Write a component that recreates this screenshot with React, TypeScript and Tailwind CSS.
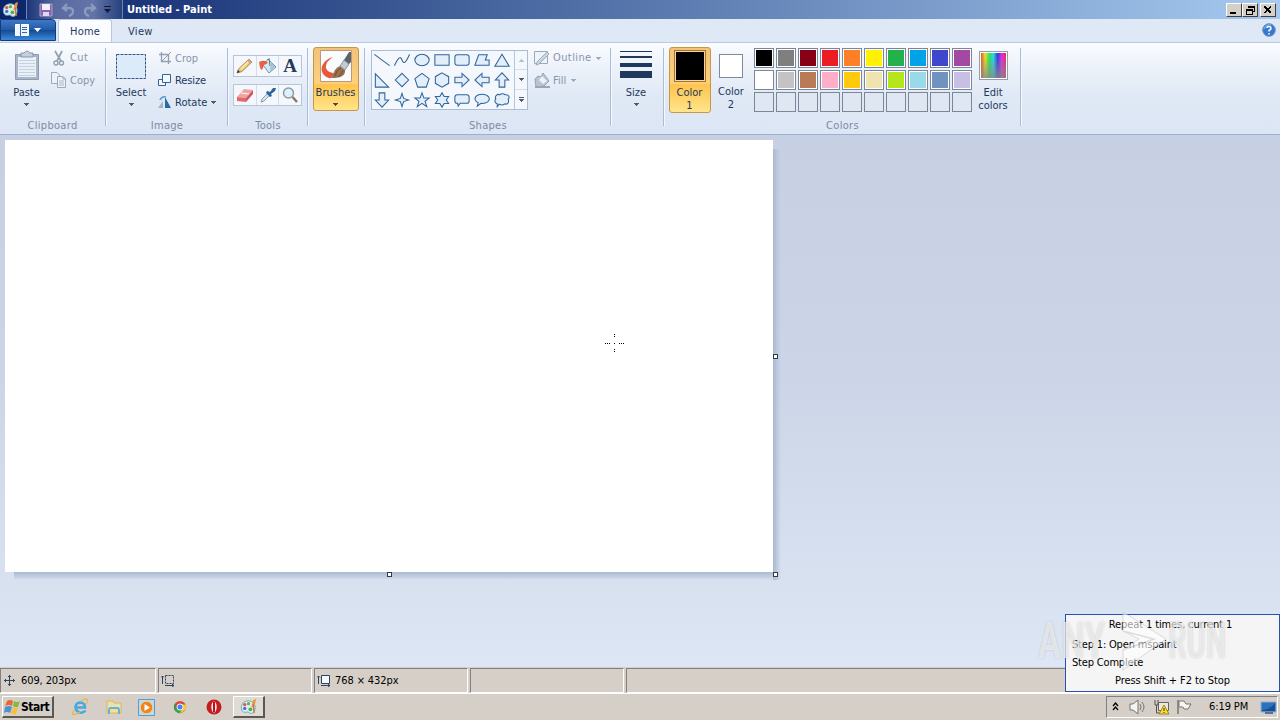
import React from 'react';

const SHAPES = [
    'M2 4L18 16', 'M2 16C6 8 8 5 10 10S14 13 18 4', 'M2.5 10a7.5 6 0 1 0 15 0a7.5 6 0 1 0 -15 0',
    'M2.5 4.5H17.5V15.5H2.5Z', 'M5 4.5H15Q17.5 4.5 17.5 7V13Q17.5 15.5 15 15.5H5Q2.5 15.5 2.5 13V7Q2.5 4.5 5 4.5Z',
    'M6.5 4.5H15.5L13.5 10H17.5V15.5H2.5Z', 'M10 4L17.5 16.5H2.5Z',
    'M3 3.5V17.5H17Z', 'M10 3L17 10L10 17L3 10Z', 'M10 3L17.5 8.5L14.5 17.5H5.5L2.5 8.5Z',
    'M10 2.5L17 6.5V13.5L10 17.5L3 13.5V6.5Z', 'M2.5 7H10V3L17.5 10L10 17V13H2.5Z',
    'M17.5 7H10V3L2.5 10L10 17V13H17.5Z', 'M7 17.5V10H3L10 2.5L17 10H13V17.5Z',
    'M7 2.5V10H3L10 17.5L17 10H13V2.5Z', 'M10 3L11.7 8.3L17 10L11.7 11.7L10 17L8.3 11.7L3 10L8.3 8.3Z',
    'M10 2.5L12 8H17.5L13.2 11.3L15 17L10 13.5L5 17L6.8 11.3L2.5 8H8Z',
    'M10 2.5L12.3 6.3H17L14.5 10L17 13.7H12.3L10 17.5L7.7 13.7H3L5.5 10L3 6.3H7.7Z',
    'M5 4.5H15Q17.5 4.5 17.5 7V11Q17.5 13.5 15 13.5H8L6 16.5L5.5 13.5H5Q2.5 13.5 2.5 11V7Q2.5 4.5 5 4.5Z',
    'M6 13C-1 9 4 4 10 4S20 8 16 12Q13 14 9 13.5L5 16.5Z',
    'M5 14C2 13 2 10 3.5 9C2 6 5 3 7.5 4.5C9 3 12 3 13.5 4.5C17 4 18.5 7 16.5 9.5C18 13 15 15 13 14C11 16 8 15 7 14.5L5 17Z',
];

const PALETTE = [
    '#000000', '#7f7f7f', '#880015', '#ed1c24', '#ff7f27', '#fff200', '#22b14c', '#00a2e8', '#3f48cc', '#a349a4',
    '#ffffff', '#c3c3c3', '#b97a57', '#ffaec9', '#ffc90e', '#efe4b0', '#b5e61d', '#99d9ea', '#7092be', '#c8bfe7',
];

const Arrow: React.FC<{ className?: string }> = ({ className = 'text-[#4d5b70]' }) => (
    <svg width="5" height="3" className={`shrink-0 ${className}`} shapeRendering="crispEdges"><path d="M0 0H5L2.5 3Z" fill="currentColor" /></svg>
);

const Group: React.FC<{ label?: string; className: string; children: React.ReactNode }> = ({ label, className, children }) => (
    <div className={`flex h-full shrink-0 ${className}`}>
        <div className="flex min-w-0 flex-1 flex-col">
            <div className="flex h-[76px] pt-1">{children}</div>
            <div className="text-center leading-[13px] tracking-[0.3px] text-[#7c8ba3]">{label}</div>
        </div>
        <div className="mt-[5px] h-[78px] w-0.5 border-l border-[#a9bcd8] bg-[#f5f9fe]" />
    </div>
);

const PaletteIcon: React.FC<{ size: number }> = ({ size }) => (
    <svg width={size} height={size} viewBox="0 0 18 18">
        <path d="M9 3C3 3 0 8 2 13C4 17 8 14 9 15C11 18 16 16 16 10C16 6 13 3 9 3Z" fill="#d9edf8" stroke="#719eb7" />
        <circle cx="5" cy="7" r="1.8" fill="#dd593f" /><circle cx="9" cy="6" r="1.7" fill="#6bac3b" />
        <circle cx="5" cy="11" r="1.8" fill="#4275ce" /><circle cx="11" cy="12" r="2" fill="#55ad3b" />
        <path d="M12 9L14 2L17 1L16 6L14 10Z" fill="#ed9332" /><path d="M14 7L15 16" stroke="#c27b3d" strokeWidth="1.5" />
    </svg>
);

const CutIcon = () => (
    <svg width="12" height="16" viewBox="0 0 12 16" fill="none" stroke="#929fae">
        <path d="M2 1L8 11M9 1L4 11" strokeWidth="1.7" /><circle cx="3" cy="13" r="2" strokeWidth="1.4" /><circle cx="8.5" cy="13" r="2" strokeWidth="1.4" />
    </svg>
);

const CopyIcon = () => (
    <svg width="16" height="16" viewBox="0 0 16 16" fill="#edf2f8" stroke="#9caabc">
        <path d="M.5 .5H6L8.5 3V11.5H.5Z" /><path d="M6.5 4.5H12L14.5 7V15.5H6.5ZM12 4.5V7H14.5" /><path d="M8 9H13M8 11H13M8 13H13" stroke="#aebac8" />
    </svg>
);

const CropIcon = () => (
    <svg width="14" height="14" viewBox="0 0 14 14" fill="none" stroke="#929fae">
        <path d="M3.5 1V10.5H13M1 3.5H10.5V13" strokeWidth="1.3" /><path d="M4 10L13 1" />
    </svg>
);

const ResizeIcon = () => (
    <svg width="14" height="14" viewBox="0 0 14 14" fill="#f3f8fd" stroke="#2f659b">
        <path d="M.5 6.5H7.5V12.5H.5Z" /><path d="M4.5 1.5H12.5V9.5H4.5Z" />
    </svg>
);

const RotateIcon = () => (
    <svg width="14" height="14" viewBox="0 0 14 14">
        <path d="M0 13L5 6V13Z" fill="#a2b4c4" /><path d="M7 2L13 13H7Z" fill="#286b9f" /><path d="M2 5Q4 1 8 2" fill="none" stroke="#54a0d1" strokeWidth="1.6" />
    </svg>
);

const tools = [
    <svg width="20" height="20" viewBox="0 0 20 20"><path d="M2 17L3.5 13L14 3L17 6L7 15.5Z" fill="#f4c96b" stroke="#8a7a5c" strokeWidth=".8" /><path d="M14 3L17 6L15 8L12 5Z" fill="#d9a08e" /><path d="M2 17L3 14L5 16Z" fill="#333" /><path d="M6 13L13 6" stroke="#fff1b3" strokeWidth="1.5" /></svg>,
    <svg width="20" height="20" viewBox="0 0 20 20"><path d="M10 3L18 11L11 17L5 9Z" fill="#d7e7f3" stroke="#527b9b" strokeWidth=".8" /><path d="M12 10L11 2" stroke="#577" /><path d="M1 6Q7 3 10 7L6 9L4 14Q2 14 1 6Z" fill="#e76244" /><path d="M13 6L17 11L12 15Z" fill="#9fc4dc" /></svg>,
    <span className="font-['Liberation_Serif',serif] text-[19px] leading-5 font-bold text-[#263a58]">A</span>,
    <svg width="20" height="20" viewBox="0 0 20 20"><path d="M2 12L9 4L18 5L11 13Z" fill="#f0a3a3" /><path d="M2 12L11 13L11 17L2 16Z" fill="#e2686c" /><path d="M11 13L18 5V9L11 17Z" fill="#cb585d" /><path d="M6 8L14 9" stroke="#fff" /></svg>,
    <svg width="20" height="20" viewBox="0 0 20 20"><path d="M3 17L4 14L11 7L13 9L6 16Z" fill="#d3e5f4" stroke="#718ca6" strokeWidth=".8" /><path d="M9 6L12 7L15 3L18 3L17 6L13 9L14 11L12 12L8 8Z" fill="#27659e" /></svg>,
    <svg width="20" height="20" viewBox="0 0 20 20"><circle cx="8.5" cy="8" r="5" fill="#e1effa" stroke="#8c9aab" strokeWidth="1.5" /><path d="M12.5 12L17 17" stroke="#8c765f" strokeWidth="2.5" /></svg>,
];

const Ribbon = () => (
    <div className="flex h-[93px] shrink-0 border-t border-b border-t-[#bac9df] border-b-[#9ab0d0] bg-[linear-gradient(#fafcff_0,#eff4fb_20px,#dfe8f5_55px,#dde6f4_100%)] text-[11px] text-[#1e395b]">
        <Group label="Clipboard" className="w-[107px]">
            <div className="ml-[9px] flex w-[35px] flex-col items-center pt-[3px]">
                <svg width="26" height="31" viewBox="0 0 26 31">
                    <path d="M1.5 4.5H24.5V29.5H1.5Z" fill="#a9b6ca" stroke="#8b9bb3" /><path d="M4 7H22V27H4Z" fill="#eaf0f8" />
                    <path d="M5 10.5H21M5 13.5H21M5 16.5H21M5 19.5H21M5 22.5H21M5 25.5H21" stroke="#c5d0e0" />
                    <path d="M7 7V3H10Q13 -1 16 3H19V7Z" fill="#c4cedd" stroke="#8797ad" />
                </svg>
                <span className="mt-[5px] leading-[13px]">Paste</span>
                <Arrow className="mt-[4px] text-[#4d5b70]" />
            </div>
            <div className="ml-[7px] flex flex-col text-[#8795aa]">
                <div className="flex h-[22px] items-center"><span className="flex w-[19px] pl-[2px]"><CutIcon /></span><span className="pt-px tracking-[0.4px]">Cut</span></div>
                <div className="flex h-[22px] items-center"><span className="w-[19px]"><CopyIcon /></span><span className="pt-0.5">Copy</span></div>
            </div>
        </Group>
        <Group label="Image" className="w-[122px]">
            <div className="ml-[6px] flex w-9 flex-col items-center pt-[7px]">
                <svg width="30" height="25"><rect x=".5" y=".5" width="29" height="24" fill="#dcebfa" stroke="#2e5684" strokeDasharray="3 1" /></svg>
                <span className="mt-[7px] leading-[13px]">Select</span>
                <Arrow className="mt-[4px] text-[#4d5b70]" />
            </div>
            <div className="ml-[9px]">
                <div className="flex h-[22px] items-center text-[#8795aa]"><span className="w-[17px]"><CropIcon /></span><span className="pt-0.5">Crop</span></div>
                <div className="flex h-[22px] items-center"><span className="w-[17px]"><ResizeIcon /></span><span className="pt-0.5 tracking-[-0.1px]">Resize</span></div>
                <div className="flex h-[22px] items-center"><span className="w-[17px]"><RotateIcon /></span><span className="pt-0.5">Rotate</span><Arrow className="ml-1 text-[#4d5b70]" /></div>
            </div>
        </Group>
        <Group label="Tools" className="w-20">
            <div className="mt-2 ml-[4px] flex flex-col gap-[7px]">
                {[0, 3].map(row => (
                    <div key={row} className="flex h-[22px] w-[69px] divide-x divide-[#d3dde9] border border-[#b6c5da] bg-[#f4f8fd]">
                        {tools.slice(row, row + 3).map((icon, i) => <span key={i} className="flex flex-1 items-center justify-center">{icon}</span>)}
                    </div>
                ))}
            </div>
        </Group>
        <Group className="w-[57px]">
            <button className="ml-1 flex h-16 w-[46px] flex-col items-center rounded-[3px] border border-[#c79746] bg-[linear-gradient(#f4c178,#fbd17d_35px,#ffc34e_37px,#ffe58b)] pt-[2px] pr-px">
                <svg width="32" height="32" viewBox="0 0 32 32">
                    <path d="M.5 .5H31.5V31.5H.5Z" fill="#f9fbfd" stroke="#ba9a74" />
                    <path d="M13 7C4 9 -2 19 4 25Q8 30 14 27L13 23Q7 22 6 18Q5 12 13 7Z" fill="#e8583a" />
                    <path d="M12 28Q14 18 20 16L25 20Q26 28 12 28Z" fill="#9b7250" /><path d="M15 26Q16 20 21 18M18 27Q22 25 23 20" stroke="#6e4c34" fill="none" />
                    <path d="M20 16L24 10L29 14L25 20Z" fill="#c1cbd0" stroke="#8b979f" /><path d="M24 10L29 2H31V12L29 14Z" fill="#5c636d" />
                </svg>
                <span className="mt-[4px] leading-[13px]">Brushes</span>
                <Arrow className="mt-[4px] text-[#6b3f2c]" />
            </button>
        </Group>
        <Group label="Shapes" className="w-[246px]">
            <div className="mt-[3px] ml-[5px] flex h-[60px] w-[157px] border border-[#a9bdd8] bg-[#f4f8fd]">
                <div className="grid h-[58px] w-[142px] shrink-0 auto-rows-[20px] grid-cols-[repeat(7,20px)]">
                    {SHAPES.map((d, i) => (
                        <svg key={i} width="20" height="20" viewBox="0 0 20 20" className="-mt-px"><path d={d} fill={i < 2 ? 'none' : '#e2effa'} stroke="#2f649c" strokeWidth="1.1" transform="translate(.5 .5) scale(.95)" /></svg>
                    ))}
                </div>
                <div className="grid flex-1 grid-rows-3 divide-y divide-[#d3deeb] border-l border-[#b6c6dc]">
                    <span className="flex items-center justify-center"><Arrow className="rotate-180 text-[#b5bfce]" /></span>
                    <span className="flex items-center justify-center"><Arrow /></span>
                    <span className="flex flex-col items-center justify-center gap-px"><i className="h-px w-[5px] bg-[#4d5b70]" /><Arrow /></span>
                </div>
            </div>
            <div className="ml-1.5 text-[#8795aa]">
                <div className="flex h-[22px] items-center">
                    <svg width="19" height="16" viewBox="0 0 19 16" fill="none" stroke="#9aaabd"><path d="M.5 1.5H13.5V13.5H.5Z" fill="#eef3f9" /><path d="M3 12L13 2L15 4L5 14L2 15Z" fill="#ccd5e1" /></svg>
                    <span className="pt-px tracking-[0.4px]">Outline</span><Arrow className="ml-1 text-[#9dabbd]" />
                </div>
                <div className="flex h-[22px] items-center">
                    <svg width="19" height="16" viewBox="0 0 19 16"><path d="M1 7L4 4L7 5L9 1L15 9L10 14L2 15Z" fill="#b8c4d3" stroke="#93a3b7" /><path d="M8 4L13 9L9 12L5 8Z" fill="#edf2f8" /><path d="M1 15H16" stroke="#98a8ba" strokeWidth="2" /></svg>
                    <span className="pt-0.5">Fill</span><Arrow className="ml-[5px] text-[#9dabbd]" />
                </div>
            </div>
        </Group>
        <Group className="w-[53px]">
            <div className="ml-[8px] flex w-8 flex-col items-center pt-[4px]">
                <div className="h-px w-8 bg-[#1e395b]" />
                <div className="mt-1 h-0.5 w-8 bg-[#1e395b]" />
                <div className="mt-[5px] h-1 w-8 bg-[#1e395b]" />
                <div className="mt-1 h-[7px] w-8 bg-[#1e395b]" />
                <span className="mt-[8px] leading-[13px]">Size</span>
                <Arrow className="mt-[4px] text-[#4d5b70]" />
            </div>
        </Group>
        <Group label="Colors" className="w-[357px]">
            <button className="ml-1 flex h-[66px] w-[42px] flex-col items-center rounded-[3px] border border-[#c79746] bg-[linear-gradient(#f4c178,#fbd17d_35px,#ffc34e_37px,#ffe58b)] pt-[2px] pr-px">
                <span className="h-8 w-8 shrink-0 border border-[#a3742e] bg-black outline-1 -outline-offset-2 outline-[#f9d59d]" />
                <span className="mt-[4px] leading-[13px]">Color<br />1</span>
            </button>
            <div className="flex w-10 flex-col items-center pt-[7px]">
                <span className="h-6 w-6 shrink-0 border border-[#7d8a9b] bg-white" />
                <span className="mt-[7px] text-center leading-[13px]">Color<br />2</span>
            </div>
            <div className="mt-px ml-[3px] grid h-[64px] w-[218px] grid-cols-10 gap-0.5">
                {Array.from({ length: 30 }, (_, i) => (
                    <span key={i} className={`h-5 w-5 border border-[#7b8797] ${i < 20 ? 'bg-white p-px' : 'bg-[#dfe7f2]'}`}>
                        <i className="block h-4 w-4" style={{ background: PALETTE[i] }} />
                    </span>
                ))}
            </div>
            <div className="ml-[3px] flex w-9 flex-col items-center pt-1">
                <span className="h-[29px] w-[29px] shrink-0 border border-[#929cab] bg-white p-px">
                    <i className="block h-full bg-[linear-gradient(transparent,#888c),linear-gradient(90deg,#ff4525,#e9ef20,#27e85a,#20ddea,#3031e6,#e22be6,#ff175b)]" />
                </span>
                <span className="mt-[6px] text-center leading-[13px]">Edit<br />colors</span>
            </div>
        </Group>
    </div>
);

const WinButton: React.FC<{ children: React.ReactNode }> = ({ children }) => (
    <button className="flex h-[14px] w-4 items-center justify-center border-t border-r border-b border-l border-t-white border-r-[#404040] border-b-[#404040] border-l-white bg-[#d6cfc8]">
        <svg width="10" height="10" viewBox="0 0 10 10" fill="none" stroke="black" shapeRendering="crispEdges">{children}</svg>
    </button>
);

const Handle: React.FC<{ className: string }> = ({ className }) => <i className={`absolute h-[5px] w-[5px] border border-[#333b48] bg-white ${className}`} />;

const StatusCell: React.FC<{ className: string; children?: React.ReactNode }> = ({ className, children }) => (
    <div className={`flex h-[25px] shrink-0 items-center border-t border-r border-b border-l border-t-[#808080] border-r-white border-b-white border-l-[#808080] ${className}`}>{children}</div>
);

const App: React.FC = () => (
    <div className="flex h-[720px] w-[1280px] flex-col overflow-hidden bg-[#d6cfc8] font-['DejaVu_Sans_Condensed','DejaVu_Sans',sans-serif] text-[11px] [font-stretch:condensed]">
        <div className="flex h-[19px] shrink-0 items-center bg-[linear-gradient(90deg,#0a246a,#a6caf0)] pr-1 pl-0.5">
            <PaletteIcon size={17} />
            <div className="ml-[7px] flex h-[19px] w-[97px] items-center border-x border-[#7182b1] bg-[linear-gradient(90deg,#1c3678,#586aa0_30%,#6374a7_70%,#25417e)] pl-[12px]">
                <svg width="14" height="14" viewBox="0 0 14 14"><path d="M1 1H13V13H1Z" fill="#8666b2" stroke="#b3a2cf" /><path d="M3 1H11V7H3Z" fill="#f4eff8" /><path d="M4 9H10V13H4Z" fill="#dfd8ec" /></svg>
                <svg width="14" height="14" viewBox="0 0 14 14" className="ml-[8px]" fill="none" stroke="#8c99c0" strokeWidth="2.4"><path d="M6 1L2 5L6 8M2 5H8Q12 5 12 8Q12 12 8 13" /></svg>
                <svg width="14" height="14" viewBox="0 0 14 14" className="ml-[8px]" fill="none" stroke="#8c99c0" strokeWidth="2.4"><path d="M8 1L12 5L8 8M12 5H6Q2 5 2 8Q2 12 6 13" /></svg>
                <span className="ml-[7px] flex flex-col items-center gap-0.5"><i className="h-px w-[7px] bg-[#101a35]" /><svg width="7" height="4"><path d="M0 0H7L3.5 4Z" fill="#101a35" /></svg></span>
            </div>
            <span className="ml-1 pt-0.5 font-bold whitespace-nowrap text-white">Untitled - Paint</span>
            <div className="ml-auto flex">
                <WinButton><path d="M1 8H7" strokeWidth="2" /></WinButton>
                <WinButton><path d="M3 1H9V6H7M3 1V3M3 2H9M1 4H7V9H1ZM1 5H7" /></WinButton>
                <span className="ml-0.5 flex"><WinButton><path d="M1.5 1.5L8 8M8 1.5L1.5 8" strokeWidth="1.5" /></WinButton></span>
            </div>
        </div>
        <div className="flex h-[23px] shrink-0 items-end bg-[#dfe8f5] text-[#1e395b]">
            <button className="mb-px flex h-[22px] w-14 items-center justify-center gap-[5px] self-end rounded-tr-sm border border-[#173a7c] bg-[linear-gradient(#3e78c5,#235ba9_48%,#164a95_52%,#398bda)]">
                <svg width="14" height="12" viewBox="0 0 14 12"><path d="M.5 .5H13.5V11.5H.5Z" fill="#edf5ff" stroke="#fff" /><path d="M5.5 0V12M7 3.5H12M7 5.5H12M7 8.5H12" stroke="#3669a5" /></svg>
                <svg width="7" height="4"><path d="M0 0H7L3.5 4Z" fill="white" /></svg>
            </button>
            <div className="ml-0.5 flex h-[23px] w-[54px] items-center justify-center rounded-t-[3px] border border-b-0 border-[#b8c7dd] bg-[#fafcff] pt-0.5 tracking-[0.15px]">Home</div>
            <div className="ml-4 flex h-[23px] items-center pt-[3px] tracking-[0.3px]">View</div>
            <svg width="14" height="14" viewBox="0 0 14 14" className="mr-1 mb-[5px] ml-auto"><circle cx="7" cy="7" r="6.3" fill="#3478d0" stroke="#6d8fc1" /><path d="M2 6Q4 1 9 2" stroke="#8fbff5" fill="none" /><path d="M5 5Q5 3.5 7 3.5T9 5.5Q9 6.5 7 7.5V8.5M7 10V11.5" stroke="white" strokeWidth="1.5" fill="none" /></svg>
        </div>
        <Ribbon />
        <div className="h-[532px] shrink-0 bg-[linear-gradient(#c6d0e2,#cbd5e7_45%,#dce6f4)] pt-[5px] pl-[5px]">
            <div className="relative h-[432px] w-[768px] bg-white">
                <i className="absolute top-[9px] -right-2 h-[431px] w-2 bg-[linear-gradient(90deg,#a9b8cf,#b9c6dc_40%,transparent)]" />
                <i className="absolute -bottom-2 left-[9px] h-2 w-[763px] bg-[linear-gradient(#aab9d0,#bac8dd_40%,transparent)]" />
                <Handle className="top-[214px] left-[768px]" />
                <Handle className="top-[432px] left-[382px]" />
                <Handle className="top-[432px] left-[768px]" />
                <svg width="20" height="20" className="absolute top-[193px] left-[600px]" fill="black" shapeRendering="crispEdges"><path d="M9 1h1v1h-1zM9 3h1v1h-1zM9 10h1v1h-1zM9 16h1v1h-1zM9 18h1v1h-1zM0 10h1v1h-1zM2 10h1v1h-1zM16 10h1v1h-1zM18 10h1v1h-1zM14 10h1v1h-1zM4 10h1v1h-1z" /></svg>
            </div>
        </div>
        <div className="flex h-[26px] shrink-0 gap-0.5 bg-[#d6cfc8] pt-px tracking-[-0.1px] text-black">
            <StatusCell className="w-[156px]">
                <svg width="12" height="12" viewBox="0 0 12 12" className="mr-[5px] ml-[3px]" fill="none" stroke="#2e4560"><path d="M5.5 0V11M0 5.5H11M4 2L5.5 .5L7 2M4 9L5.5 10.5L7 9M2 4L.5 5.5L2 7M9 4L10.5 5.5L9 7" /></svg><span className="pt-px">609, 203px</span>
            </StatusCell>
            <StatusCell className="w-[154px]">
                <svg width="14" height="12" className="ml-0.5" fill="none" stroke="#2e4560"><path d="M4.5 .5H12.5V8.5H4.5Z" strokeDasharray="2 1" /><path d="M1.5 1V9M0 2.5L1.5 1L3 2.5M4 10.5H13M11 9L13 10.5L11 12" /></svg>
            </StatusCell>
            <StatusCell className="w-[154px]">
                <svg width="14" height="12" className="mr-[4px] ml-0.5" fill="none" stroke="#2e4560"><path d="M4.5 .5H12.5V8.5H4.5Z" fill="#f3faff" /><path d="M1.5 1V9M0 2.5L1.5 1L3 2.5M4 10.5H13M11 9L13 10.5L11 12" /></svg><span className="pt-px">768 × 432px</span>
            </StatusCell>
            <StatusCell className="w-[154px]" />
            <StatusCell className="w-[654px]" />
        </div>
        <div className="flex h-[27px] shrink-0 items-center border-t border-white bg-[#d6cfc8] pl-0.5 text-black">
            <button className="flex h-[22px] w-[52px] items-center border-t border-r-2 border-b-2 border-l border-t-white border-r-[#5b5854] border-b-[#5b5854] border-l-white pl-px text-[12px] font-bold">
                <svg width="17" height="16" viewBox="0 0 17 16" className="shrink-0"><path d="M3 2Q6 0 9 2L8 7Q5 5 1 7Z" fill="#e66835" /><path d="M10 2Q13 4 16 2L14 8Q11 9 9 7Z" fill="#83b944" /><path d="M1 8Q5 6 8 8L6 14Q3 12 0 14Z" fill="#4c91d3" /><path d="M9 8Q11 10 14 9L12 15Q9 16 7 14Z" fill="#f6bf3c" /></svg>
                <span className="pt-px tracking-[-0.5px]">Start</span>
            </button>
            <svg width="18" height="18" viewBox="0 0 18 18" className="ml-[17px]"><path d="M14.5 12.5Q12 15.5 8.5 14.5Q4.500 13 4.500 9Q5 4.500 9.500 4.500Q14 5 14 9.500H5" fill="none" stroke="#49a9df" strokeWidth="2.6" /><path d="M3 12Q0 17 3 16.500Q6 16 9 14M10 3Q16 -.5 16.500 2Q16.500 4 14.500 6.500" fill="none" stroke="#e1b95b" strokeWidth="1.3" /></svg>
            <svg width="18" height="18" viewBox="0 0 18 18" className="ml-[16px]"><path d="M2 3H8L9 5H16V15H2Z" fill="#f5df95" stroke="#d5b868" /><path d="M3 7H15V10H3Z" fill="#d3e8cd" /><path d="M4 16V12Q4 10 6 10H12Q14 10 14 12V16" fill="none" stroke="#70add0" strokeWidth="2" /></svg>
            <svg width="17" height="17" viewBox="0 0 17 17" className="ml-[15px]"><path d="M.5 .5H16.5V16.5H.5Z" fill="#b8dcf3" stroke="#5a9bc9" /><circle cx="8.5" cy="8.5" r="6.3" fill="#ef851e" stroke="#fad29a" /><path d="M6.5 5L12 8.5L6.5 12Z" fill="white" /></svg>
            <svg width="14" height="14" viewBox="0 0 16 16" className="ml-[18px]"><circle cx="8" cy="8" r="7" fill="#db483b" /><path d="M2 4L7 15Q1 13 1 8Z" fill="#2a9b51" /><path d="M15 6L9 15Q4 15 2 11L8 10Z" fill="#3aa650" /><path d="M8 5H15Q17 12 8 15L11 9Z" fill="#f2ca38" /><circle cx="8" cy="8" r="3.5" fill="#4386ee" stroke="white" /></svg>
            <svg width="16" height="16" viewBox="0 0 16 16" className="ml-[19px]"><circle cx="8" cy="8" r="7.5" fill="#c51c20" /><ellipse cx="8" cy="8" rx="2.7" ry="5.5" fill="#f9e5e4" /><path d="M8 3V13" stroke="#b41518" strokeWidth="2" /></svg>
            <button className="ml-[11px] flex h-[22px] w-[32px] items-center justify-center border-t border-r-2 border-b-2 border-l border-t-white border-r-[#5b5854] border-b-[#5b5854] border-l-white bg-[#dfdcd6]"><PaletteIcon size={17} /></button>
            <div className="mr-[2px] ml-auto flex h-[22px] w-[172px] items-center border border-t-[#808080] border-r-white border-b-white border-l-[#808080] pl-[5px]">
                <svg width="7" height="10" fill="none" stroke="black" strokeWidth="1.3"><path d="M1 4L3.5 1L6 4M1 8L3.5 5L6 8" /></svg>
                <svg width="17" height="16" viewBox="0 0 17 16" className="ml-[10px]" fill="#f4f4f2" stroke="#77756f"><path d="M1 5H4L9 1V15L4 11H1Z" /><path d="M11 5Q13 8 11 11M13 3Q17 8 13 13" fill="none" /></svg>
                <svg width="17" height="16" viewBox="0 0 17 16" className="ml-[7px]"><path d="M5.5 3.5H15.5V11.5H5.5Z" fill="#e9e9e4" stroke="#66645e" /><path d="M2 1V6H5V1M3.5 6V14H8" fill="none" stroke="#55534c" /><path d="M11 6L16 15H6Z" fill="#ffdb38" stroke="#a38617" /><path d="M11 9V12M11 13V14" stroke="#333" /></svg>
                <svg width="17" height="16" viewBox="0 0 17 16" className="ml-[6px]" fill="#f6f6f3" stroke="#77756f"><path d="M2 1V15" strokeWidth="1.5" /><path d="M3 2H8L10 5H15L12 10H8L7 8H3Z" /></svg>
                <span className="ml-[16px] pt-px tracking-[-0.1px] whitespace-nowrap">6:19 PM</span>
                <svg width="17" height="15" viewBox="0 0 17 15" className="ml-auto"><path d="M1 2H16V12H1Z" fill="#2d71bd" stroke="#8faecc" /><path d="M2 10Q10 10 15 3V11H2Z" fill="#194e93" /><path d="M5 13H13" stroke="#59728d" strokeWidth="2" /></svg>
            </div>
        </div>
        <div className="fixed top-[614px] left-[1065px] h-[78px] w-[215px] border border-[#2850b4] bg-[#f5f5f5] text-black">
            <div className="mt-[3px] pr-1 text-center leading-[13px] tracking-[-0.12px]">Repeat 1 times, current 1</div>
            <div className="mt-[7px] pl-1.5 leading-[13px] tracking-[-0.18px]">Step 1: Open mspaint</div>
            <div className="mt-[5px] pl-1.5 leading-[13px] tracking-[-0.18px]">Step Complete</div>
            <div className="mt-[5px] text-center leading-[13px] tracking-[-0.08px]">Press Shift + F2 to Stop</div>
        </div>
        <div className="pointer-events-none fixed top-[608px] left-[1038px] flex h-[66px] w-[198px] items-center font-['Roboto',sans-serif] text-[50px] leading-none font-medium text-white/60 [text-shadow:0_0_2px_#8887]">
            <span className="w-[80px] origin-left scale-x-[.78]">ANY</span>
            <svg width="50" height="66" viewBox="0 0 50 66" className="shrink-0 opacity-60"><path d="M5 4L48 31L5 62V42L21 31L5 23Z" fill="white" stroke="#c6c6c6" /><path d="M5 23L36 31L5 42" fill="none" stroke="#ccc" strokeWidth="1.5" /></svg>
            <span className="origin-left scale-x-[.68]">RUN</span>
        </div>
    </div>
);

export default App;
